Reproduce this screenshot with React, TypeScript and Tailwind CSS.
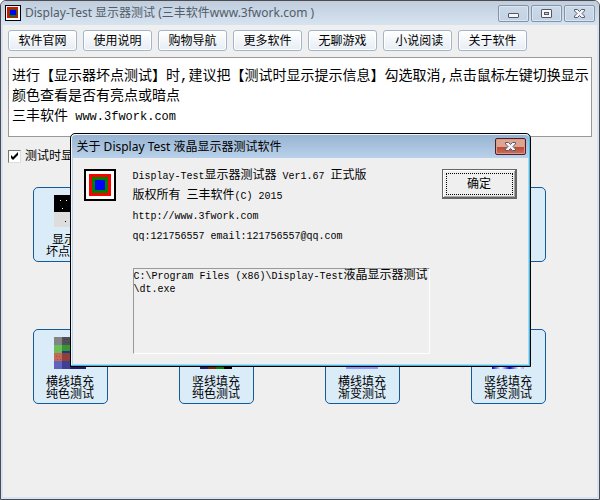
import React, { useState } from 'react';

const links = ['软件官网', '使用说明', '购物导航', '更多软件', '无聊游戏', '\u00a0小说阅读', '关于软件'];

interface Test {
  id: string;
  lines: string[];
  icon?: React.ReactNode;
}

const DeadPixelIcon = () => (
  <svg width="32" height="32" viewBox="0 0 32 32" shapeRendering="crispEdges">
    <path fill="#000" d="M0 0h32v17H0z" />
    <path fill="#ddd" d="M0 17h32v15H0z" />
    <path fill="#fff" d="M6 5h1v1H6zM12 5h1v1h-1zM8 13h1v1H8zM22 8h1v1h-1z" />
    <path fill="#000" d="M11 26h1v1h-1zM24 22h1v1h-1z" />
  </svg>
);

const solidRows = [
  ['#848484', '#505058', '#383840', '#202028'],
  ['#6cbc5c', '#3c9430', '#1c6c18', '#104810'],
  ['#c46858', '#904038', '#702820', '#501810'],
  ['#6064bc', '#404090', '#201c70', '#201c70'],
];

const SolidRowsIcon = () => (
  <svg width="32" height="32" viewBox="0 0 32 32" shapeRendering="crispEdges">
    {solidRows.map((row, y) =>
      row.map((fill, x) => (
        <rect key={`${x}-${y}`} x={x * 8} y={y * 8} width="8" height="8" fill={fill} />
      ))
    )}
    <path fill="#0c4090" d="M8 14h24v2H8z" />
    <path fill="#40404a" d="M10 2h1v1h-1zM13 2h1v1h-1zM11 5h1v1h-1zM14 5h1v1h-1z" />
    <path fill="#a05048" d="M2 19h1v1H2zM5 19h1v1H5zM3 22h1v1H3zM6 22h1v1H6z" />
  </svg>
);

const SolidColumnsIcon = () => (
  <svg width="32" height="32" viewBox="0 0 32 32" shapeRendering="crispEdges">
    <path fill="#201c70" d="M0 0h8v32H0z" />
    <path fill="#702800" d="M8 0h8v32H8z" />
    <path fill="#008000" d="M16 0h8v32h-8z" />
    <path fill="#000" d="M24 0h8v32h-8z" />
  </svg>
);

const GradientRowsIcon = () => (
  <svg width="32" height="32" viewBox="0 0 32 32">
    <defs>
      <linearGradient id="rows" x2="0" y2="1">
        <stop offset="0" stopColor="#00f" />
        <stop offset="1" stopColor="#9898ff" />
      </linearGradient>
    </defs>
    <path fill="url(#rows)" d="M0 0h32v32H0z" />
  </svg>
);

const GradientColumnsIcon = () => (
  <svg width="32" height="32" viewBox="0 0 32 32">
    <defs>
      <linearGradient id="columns">
        <stop offset="0" stopColor="#00f" />
        <stop offset="0.28" stopColor="#fff" />
        <stop offset="0.55" stopColor="#00f" />
        <stop offset="0.84" stopColor="#fff" />
        <stop offset="1" stopColor="#a0a0ff" />
      </linearGradient>
    </defs>
    <path fill="url(#columns)" d="M0 0h32v32H0z" />
  </svg>
);

const tests: Test[] = [
  { id: 'pixel', lines: ['显示器', '坏点测试'], icon: <DeadPixelIcon /> },
  { id: 'second', lines: [] },
  { id: 'third', lines: [] },
  { id: 'fourth', lines: [] },
  { id: 'row-solid', lines: ['横线填充', '纯色测试'], icon: <SolidRowsIcon /> },
  { id: 'col-solid', lines: ['竖线填充', '纯色测试'], icon: <SolidColumnsIcon /> },
  { id: 'row-gradient', lines: ['横线填充', '渐变测试'], icon: <GradientRowsIcon /> },
  { id: 'col-gradient', lines: ['竖线填充', '渐变测试'], icon: <GradientColumnsIcon /> },
];

const SmallLogo = () => (
  <svg width="16" height="16" viewBox="0 0 16 16" shapeRendering="crispEdges">
    <path fill="#000" d="M0 0h16v16H0z" />
    <path fill="#fff" d="M1 1h14v14H1z" />
    <path fill="#f00" d="M2 2h11v11H2z" />
    <path fill="#008000" d="M4 4h8v8H4z" />
    <path fill="#00f" d="M5 5h6v5H5z" />
  </svg>
);

const Logo = () => (
  <svg width="32" height="32" viewBox="0 0 32 32" shapeRendering="crispEdges">
    <path fill="#000" d="M0 0h32v32H0z" />
    <path fill="#fff" d="M2 2h28v28H2z" />
    <path fill="#f00" d="M5 5h22v22H5z" />
    <path fill="#008000" d="M8 8h16v16H8z" />
    <path fill="#00f" d="M11 11h10v10H11z" />
  </svg>
);

const CrossIcon = () => (
  <svg width="13" height="11" viewBox="0 0 13 11">
    <path
      d="M1.5 1.5h3l2 2 2-2h3v1.4L9 5.5l2.5 2.6v1.4h-3l-2-2-2 2h-3V8.1L4 5.5 1.5 2.9z"
      fill="#f4f4f6"
      stroke="#555a6e"
      strokeWidth="1"
    />
  </svg>
);

// Latin runs are set at half the width of the Chinese glyphs
const Latin: React.FC<{ children: React.ReactNode }> = ({ children }) => (
  <span className='font-["Liberation_Mono",monospace] text-[10px] leading-none'>{children}</span>
);

const controlClass =
  'flex h-[17px] w-[31px] items-center justify-center rounded-[2px] border border-[#8593a8] bg-linear-to-b from-[#cbd9e8] to-[#c3d3e4] shadow-[inset_0_0_0_1px_#dbe6f1]';

const WindowControls = () => (
  <div className="flex gap-0.5">
    <button aria-label="Minimize" className={controlClass}>
      <svg width="11" height="11" viewBox="0 0 11 11">
        <rect x="0.5" y="5.5" width="10" height="4" rx="0.5" fill="#f6f6f6" stroke="#555566" />
      </svg>
    </button>
    <button aria-label="Maximize" className={controlClass}>
      <svg width="11" height="9" viewBox="0 0 11 9">
        <rect x="0.5" y="0.5" width="10" height="8" rx="0.5" fill="#f6f6f6" stroke="#555566" />
        <rect x="3.5" y="3.5" width="4" height="2" fill="#c5d4e5" stroke="#555566" />
      </svg>
    </button>
    <button aria-label="Close" className={controlClass}>
      <CrossIcon />
    </button>
  </div>
);

const TestButton: React.FC<{ test: Test }> = ({ test }) => (
  <button className="flex h-[75px] flex-col items-center rounded-[5px] border border-[#145a96] bg-[#dbecf9] pt-[7px] pr-px text-[12px] leading-[12px]">
    {test.icon}
    <span className="flex flex-col items-center pt-[7px]">
      {test.lines.map((line) => (
        <span key={line}>{line}</span>
      ))}
    </span>
  </button>
);

const AboutDialog: React.FC<{ onClose: () => void }> = ({ onClose }) => (
  <div className="absolute inset-0 flex items-center justify-center">
    <div
      role="dialog"
      aria-labelledby="about-title"
      className="rounded-t-[5px] border border-black bg-[#efefef] shadow-[inset_-1px_-1px_0_#35bfe4,inset_1px_1px_0_#eef5fc,inset_-2px_-2px_0_#b9d1ea,inset_2px_0_0_#b9d1ea]"
    >
      <div className="mx-px mt-px flex h-[23px] items-center justify-between rounded-t-[4px] bg-linear-to-b from-[#98b4d2] to-[#b9d1ea] pr-[3px] pl-[5px]">
        <h2 id="about-title" className='font-["Noto_Sans","Noto_Sans_CJK_SC",sans-serif] text-[12px] leading-5'>
          关于 Display Test 液晶显示器测试软件
        </h2>
        <button
          aria-label="Close"
          onClick={onClose}
          className="flex h-[17px] w-[31px] items-center justify-center rounded-[2px] border border-[#4c1f28] bg-linear-to-b from-[#dda48f] from-50% via-[#b9452f] via-50% to-[#c8705e] shadow-[inset_0_0_0_1px_#dc9a8b]"
        >
          <CrossIcon />
        </button>
      </div>

      <div className="flex items-start pt-[7px] pr-[13px] pb-[12px] pl-[13px] text-[12px] leading-5">
        <div className="mt-1 mr-[17px]">
          <Logo />
        </div>
        <div className="mr-3 w-[297px]">
          <p><Latin>Display-Test</Latin>显示器测试器<Latin> Ver1.67 </Latin>正式版</p>
          <p>版权所有<Latin> </Latin>三丰软件<Latin>(C) 2015</Latin></p>
          <p><Latin>http://www.3fwork.com</Latin></p>
          <p><Latin>qq:121756557 email:121756557@qq.com</Latin></p>
          <div className="mt-[23px] h-[86px] border border-t-[#999] border-r-white border-b-white border-l-[#999] leading-[12px] break-all">
            <Latin>C:\Program Files (x86)\Display-Test</Latin>液晶显示器测试
            <br />
            <Latin>\dt.exe</Latin>
          </div>
        </div>
        <button
          onClick={onClose}
          className="mt-1 h-[30px] w-[75px] border border-r-2 border-b-2 border-[#666] pt-[3px] pr-[2px] pb-[2px] pl-[3px] shadow-[inset_1px_1px_0_#fff,inset_-1px_-1px_0_#a8a8a8]"
        >
          <span className="flex h-full items-center justify-center border border-dotted border-black">确定</span>
        </button>
      </div>
    </div>
  </div>
);

const App: React.FC = () => {
  const [aboutOpen, setAboutOpen] = useState(true);
  const [showHints, setShowHints] = useState(true);

  return (
    <div className='relative flex min-h-screen flex-col rounded-t-[6px] border border-[#4b4b50] bg-[#efefef] font-["Liberation_Sans","Noto_Sans_CJK_SC",sans-serif] text-[12px] text-black shadow-[inset_-2px_-2px_0_#d6e3f3,inset_2px_0_0_#d6e3f3]'>
      <header className="flex h-6 items-center justify-between rounded-t-[5px] bg-linear-to-b from-[#bfcddc] to-[#d6e4f2] px-1">
        <div className="flex items-center gap-1">
          <SmallLogo />
          <h1 className='font-["Noto_Sans","Noto_Sans_CJK_SC",sans-serif] text-[12px] leading-5 text-[#535c68]'>
            Display-Test 显示器测试 (三丰软件www.3fwork.com )
          </h1>
        </div>
        <WindowControls />
      </header>

      <main className="px-[7px] pt-[5px] pb-4">
        <nav className="flex gap-1.5">
          {links.map((link) => (
            <button
              key={link}
              onClick={() => link === '关于软件' && setAboutOpen(true)}
              className="h-[21px] w-[69px] rounded-[3px] border border-[#a3b5ca] bg-linear-to-b from-white to-[#e6edf4] pt-0.5 leading-[17px] shadow-[inset_0_0_0_1px_#fff]"
            >
              {link}
            </button>
          ))}
        </nav>

        <div className='mt-1.5 min-h-20 border border-[#999] bg-white pt-2 pl-[3px] font-["Liberation_Mono","Noto_Sans_CJK_SC",monospace] text-[14px] leading-5'>
          <p>进行【显示器坏点测试】时,建议把【测试时显示提示信息】勾选取消,点击鼠标左键切换显示颜色查看是否有亮点或暗点</p>
          <p>
            三丰软件<span className="text-[12px] leading-none"> www.3fwork.com</span>
          </p>
        </div>

        <label className="mt-[9px] flex h-5 w-fit items-center gap-1">
          <span className="grid">
            <input
              type="checkbox"
              checked={showHints}
              onChange={(e) => setShowHints(e.target.checked)}
              className="peer col-start-1 row-start-1 size-[13px] appearance-none border border-t-[#777] border-r-[#ddd] border-b-[#ddd] border-l-[#777] bg-white"
            />
            <svg
              width="13"
              height="13"
              viewBox="0 0 13 13"
              className="pointer-events-none invisible col-start-1 row-start-1 peer-checked:visible"
            >
              <path d="M3 5v3l2 2 5-5V2L5 7z" fill="#000" />
            </svg>
          </span>
          测试时显示提示信息
        </label>

        <div className="mt-[21px] grid grid-cols-[repeat(4,75px)] gap-x-[71px] gap-y-[67px] pl-[25px]">
          {tests.map((test) => (
            <TestButton key={test.id} test={test} />
          ))}
        </div>
      </main>

      {aboutOpen && <AboutDialog onClose={() => setAboutOpen(false)} />}
    </div>
  );
};

export default App;
